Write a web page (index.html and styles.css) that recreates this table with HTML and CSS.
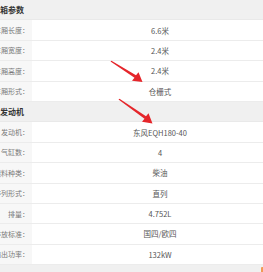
FILE: index.html
```html
<!DOCTYPE html>
<html lang="zh">
<head>
<meta charset="utf-8">
<link rel="stylesheet" href="styles.css">
</head>
<body>
<div class="page">
  <div class="sheet">
    <div class="head"><span class="head-text">货箱参数</span></div>
    <div class="row"><div class="label"><span>车厢长度：</span></div><div class="value">6.6米</div></div>
    <div class="row"><div class="label"><span>车厢宽度：</span></div><div class="value">2.4米</div></div>
    <div class="row"><div class="label"><span>车厢高度：</span></div><div class="value">2.4米</div></div>
    <div class="row"><div class="label"><span>车厢形式：</span></div><div class="value">仓栅式</div></div>
    <div class="head"><span class="head-text first">发动机</span></div>
    <div class="row"><div class="label"><span>发动机：</span></div><div class="value">东风EQH180-40</div></div>
    <div class="row"><div class="label"><span>气缸数：</span></div><div class="value">4</div></div>
    <div class="row"><div class="label"><span>燃料种类：</span></div><div class="value">柴油</div></div>
    <div class="row"><div class="label"><span>气缸排列形式：</span></div><div class="value">直列</div></div>
    <div class="row"><div class="label"><span>排量：</span></div><div class="value">4.752L</div></div>
    <div class="row"><div class="label"><span>排放标准：</span></div><div class="value">国四/欧四</div></div>
    <div class="row"><div class="label"><span>最大输出功率：</span></div><div class="value">132kW</div></div>
    <div class="head tail"></div>
  </div>
  <svg class="arrows" width="263" height="272" viewBox="0 0 263 272">
    <polygon points="110.5,61.5 111.5,60.8 136,75.3 138.5,72.3 142.5,82 132,80.7 134.5,77.7" fill="#e5262b"/>
    <polygon points="118.5,99.5 119.5,98.8 146,116.3 148.5,113.3 152.5,123.5 142,121.7 144.5,118.7" fill="#e5262b"/>
  </svg>
  <span class="badge"></span>
</div>
</body>
</html>
```

FILE: styles.css
```css
html, body {
  margin: 0;
  padding: 0;
  background: #ffffff;
}
.page {
  width: 263px;
  height: 272px;
  overflow: hidden;
  position: relative;
  font-family: "Noto Sans CJK SC", "Noto Sans", sans-serif;
}
.sheet {
  width: 288px;
  display: flex;
  flex-direction: column;
}
.head {
  height: 20.4px;
  box-sizing: border-box;
  background: #f0f0f0;
  display: flex;
  align-items: center;
  overflow: hidden;
  border-bottom: 1px solid #e9e9e9;
}
.head-text {
  font-size: 8px;
  font-weight: bold;
  color: #333333;
  white-space: nowrap;
  margin-left: -8px;
}
.head-text.first {
  margin-left: 0;
}
.row {
  height: 20.4px;
  box-sizing: border-box;
  display: flex;
  border-bottom: 1px solid #ececec;
}
.label {
  width: 32px;
  flex: none;
  background: #f7f7f7;
  display: flex;
  justify-content: flex-end;
  align-items: center;
  overflow: hidden;
  padding-right: 3px;
  box-sizing: border-box;
}
.label span {
  white-space: nowrap;
  font-size: 7px;
  color: #777777;
}
.value {
  flex: 1;
  display: flex;
  justify-content: center;
  align-items: center;
  font-size: 7.5px;
  color: #555555;
  white-space: nowrap;
}
.arrows {
  position: absolute;
  left: 0;
  top: 0;
}
.badge {
  position: absolute;
  left: 261px;
  top: 267px;
  width: 4px;
  height: 6px;
  background: #f29a55;
  border-radius: 1px;
}
```
